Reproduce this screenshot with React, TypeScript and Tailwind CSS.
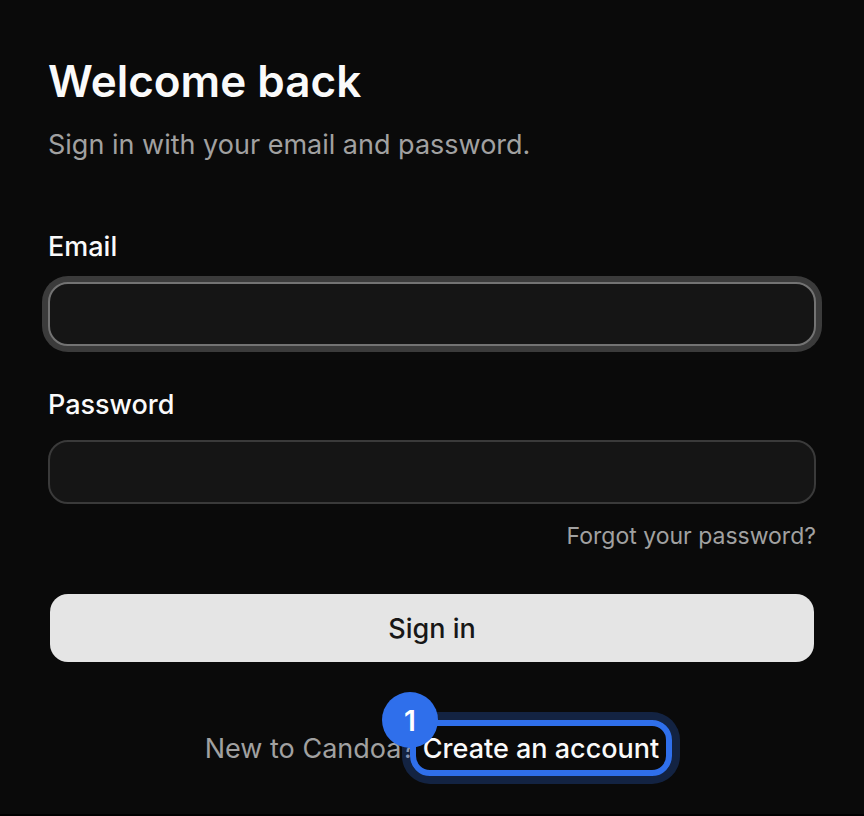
import type { InputHTMLAttributes } from 'react'

type FieldProps = InputHTMLAttributes<HTMLInputElement> & { id: string; label: string }

function Field({ id, label, ...props }: FieldProps) {
  return (
    <div className="flex flex-col gap-3.5">
      <label htmlFor={id} className="text-[27px] leading-[42px] font-medium text-neutral-50">
        {label}
      </label>
      <input
        id={id}
        className="h-16 w-full rounded-[20px] border-2 border-[#3a3a3a] bg-[#151515] px-6 text-[27px] text-neutral-50 caret-transparent outline-none focus:border-[#737373] focus:ring-6 focus:ring-[#3b3b3b]"
        {...props}
      />
    </div>
  )
}

// outlined callout drawn over the link, with its step number on the corner
function StepMarker({ step }: { step: number }) {
  return (
    <span className="pointer-events-none absolute -inset-x-[13px] -top-2 -bottom-1.5 rounded-[20px] border-6 border-[#2f6feb] ring-8 ring-[#2f6feb]/25">
      <span className="absolute -top-[34px] -left-[34px] flex size-14 items-center justify-center rounded-full bg-[#2f6feb] pt-0.5 text-[28px] font-semibold text-white">
        {step}
      </span>
    </span>
  )
}

export default function App() {
  return (
    <main className="min-h-screen border-b-2 border-black bg-[#0a0a0a] px-12 pt-[49px] pb-8 font-['Inter','Liberation_Sans',sans-serif]">
      <header>
        <h1 className="text-[44px] leading-16 font-semibold text-neutral-50">Welcome back</h1>
        <p className="mt-3 text-[27px] leading-10 text-[#a1a1a1]">Sign in with your email and password.</p>
      </header>

      <form className="mt-[61px]" onSubmit={(e) => e.preventDefault()}>
        <div className="flex flex-col gap-[38px]">
          <Field id="email" label="Email" type="email" autoComplete="email" autoFocus />
          <Field id="password" label="Password" type="password" autoComplete="current-password" />
        </div>
        <div className="mt-4 flex justify-end">
          <a href="#forgot" className="text-[23px] leading-8 text-[#a1a1a1]">
            Forgot your password?
          </a>
        </div>
        <button
          type="submit"
          className="mt-10 h-18 w-full rounded-[20px] border-2 border-transparent bg-[#e5e5e5] bg-clip-padding pt-0.5 text-[27px] font-medium text-neutral-900"
        >
          Sign in
        </button>
      </form>

      <p className="mt-16 text-center text-[27px] leading-[42px] text-[#a1a1a1]">
        New to Candoa?{' '}
        <a href="#signup" className="relative inline-block font-medium text-neutral-50">
          Create an account
          <StepMarker step={1} />
        </a>
      </p>
    </main>
  )
}
